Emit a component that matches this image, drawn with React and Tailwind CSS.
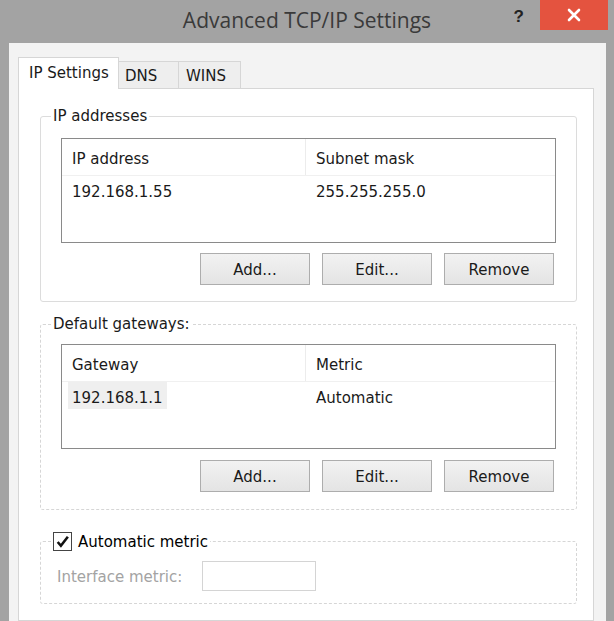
import React from "react";

const GroupBox = ({ legend, children, dashed }) => (
  <fieldset
    className={`border rounded-[3px] ${
      dashed ? "border-dashed border-[#d6d6d6]" : "border-[#dcdcdc]"
    }`}
  >
    <legend className="ml-[10px] px-[2px] leading-[22px]">{legend}</legend>
    {children}
  </fieldset>
);

const ListView = ({ headers, row, highlight }) => (
  <div className="h-[105px] border border-[#8a8a8a] bg-white">
    <div className="flex h-[37px] border-b border-[#f0f0f0]">
      <div className="w-[244px] border-r border-[#ececec] pl-[10px] pt-[4px] flex items-center">
        {headers[0]}
      </div>
      <div className="flex-1 pl-[10px] pt-[4px] flex items-center">
        {headers[1]}
      </div>
    </div>
    <div className="flex h-[27px]">
      <div className="w-[244px] pl-[6px] flex">
        <span
          className={`h-full flex items-center px-[4px] pt-[5px] ${
            highlight ? "bg-[#efefef]" : ""
          }`}
        >
          {row[0]}
        </span>
      </div>
      <div className="flex-1 pl-[10px] pt-[5px] flex items-center">{row[1]}</div>
    </div>
  </div>
);

const Buttons = () => (
  <div className="flex justify-end gap-[12px] pr-[2px]">
    {["Add...", "Edit...", "Remove"].map((label) => (
      <button
        key={label}
        className="w-[110px] h-[32px] border border-[#adadad] bg-gradient-to-b from-[#f2f2f2] to-[#e4e4e4] text-[#1a1a1a] pt-[2px] flex items-center justify-center"
      >
        {label}
      </button>
    ))}
  </div>
);

export default function App() {
  return (
    <div className="w-[614px] h-[621px] overflow-hidden bg-[#a3a3a3] flex flex-col font-['DejaVu_Sans',Verdana,sans-serif] text-[15px] text-[#1a1a1a]">
      {/* Title bar */}
      <div className="h-[43px] shrink-0 grid grid-cols-[1fr_auto_1fr]">
        <div />
        <div className="pt-[5px] font-['Open_Sans',sans-serif] text-[21px] text-[#3a3a3a]">
          Advanced TCP/IP Settings
        </div>
        <div className="flex justify-end items-start">
          <span className="mt-[4px] mr-[16px] font-['Liberation_Sans',sans-serif] font-bold text-[17px] text-[#222]">
            ?
          </span>
          <div className="w-[68px] h-[30px] mr-[6px] bg-[#e4533f] flex items-center justify-center">
            <svg width="14" height="14" viewBox="0 0 14 14">
              <path
                d="M2 2 L12 12 M12 2 L2 12"
                stroke="white"
                strokeWidth="2.6"
                strokeLinecap="round"
              />
            </svg>
          </div>
        </div>
      </div>

      {/* Dialog body */}
      <div className="flex-1 ml-[9px] mr-[8px] bg-[#f3f3f3] pt-[14px] pl-[9px] pr-[12px] flex flex-col">
        {/* Tabs */}
        <div className="flex items-end h-[31px]">
          <div className="relative z-10 -mb-px w-[101px] h-[32px] bg-white border border-b-0 border-[#d6d6d6] pl-[10px] flex items-center">
            IP Settings
          </div>
          <div className="w-[60px] h-[27px] bg-[#eeeeee] border border-l-0 border-b-0 border-[#d6d6d6] pl-[6px] pt-[2px] flex items-center">
            DNS
          </div>
          <div className="w-[62px] h-[27px] bg-[#eeeeee] border border-l-0 border-b-0 border-[#d6d6d6] pl-[7px] pt-[2px] flex items-center">
            WINS
          </div>
        </div>

        {/* Tab panel */}
        <div className="flex-1 bg-white border border-[#d6d6d6] pt-[16px] pl-[21px] pr-[16px] flex flex-col">
          <GroupBox legend="IP addresses">
            <div className="px-[20px] pt-[11px] pb-[16px] flex flex-col gap-[10px]">
              <ListView
                headers={["IP address", "Subnet mask"]}
                row={["192.168.1.55", "255.255.255.0"]}
              />
              <Buttons />
            </div>
          </GroupBox>

          <div className="mt-[11px]">
            <GroupBox legend="Default gateways:" dashed>
              <div className="px-[20px] pt-[9px] pb-[17px] flex flex-col gap-[11px]">
                <ListView
                  headers={["Gateway", "Metric"]}
                  row={["192.168.1.1", "Automatic"]}
                  highlight
                />
                <Buttons />
              </div>
            </GroupBox>
          </div>

          <div className="mt-[19px]">
            <GroupBox
              dashed
              legend={
                <span className="flex items-center gap-[6px]">
                  <span className="w-[19px] h-[19px] border border-[#444] bg-white flex items-center justify-center">
                    <svg width="15" height="15" viewBox="0 0 14 14">
                      <path
                        d="M2.5 7.5 L5.5 11 L12 2.5"
                        stroke="#111"
                        strokeWidth="2.4"
                        fill="none"
                      />
                    </svg>
                  </span>
                  <span className="text-black pt-[2px]">Automatic metric</span>
                </span>
              }
            >
              <div className="pl-[16px] pt-[8px] pb-[12px] flex items-center">
                <span className="w-[145px] text-[#a3a3a3] pt-[3px]">
                  Interface metric:
                </span>
                <div className="w-[114px] h-[30px] border border-[#d4d4d4] bg-white" />
              </div>
            </GroupBox>
          </div>
        </div>
      </div>
    </div>
  );
}
